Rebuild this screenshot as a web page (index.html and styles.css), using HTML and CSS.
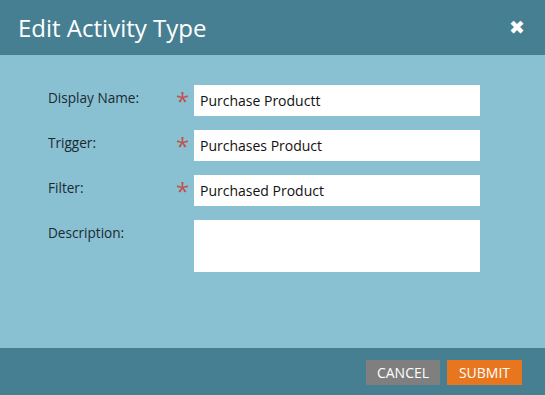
FILE: index.html
```html
<!DOCTYPE html>
<html lang="en">
<head>
  <meta charset="UTF-8">
  <title>Edit Activity Type</title>
  <link rel="stylesheet" href="styles.css">
</head>
<body>
  <div class="dialog">
    <div class="dialog-header">
      <h1>Edit Activity Type</h1>
      <span class="close">&#10006;</span>
    </div>

    <form class="dialog-body">
      <label class="field-label">Display Name:</label>
      <span class="req">*</span>
      <input type="text" class="field" value="Purchase Productt">

      <label class="field-label">Trigger:</label>
      <span class="req">*</span>
      <input type="text" class="field" value="Purchases Product">

      <label class="field-label">Filter:</label>
      <span class="req">*</span>
      <input type="text" class="field" value="Purchased Product">

      <label class="field-label">Description:</label>
      <span class="req"></span>
      <textarea class="field area"></textarea>
    </form>

    <div class="dialog-footer">
      <button class="btn btn-cancel">CANCEL</button>
      <button class="btn btn-submit">SUBMIT</button>
    </div>
  </div>
</body>
</html>
```

FILE: styles.css
```css
body {
  margin: 0;
  font-family: 'Open Sans', sans-serif;
}

.dialog {
  width: 545px;
  height: 395px;
  display: flex;
  flex-direction: column;
  background: #89c1d3;
}

.dialog-header {
  height: 55px;
  background: #477f92;
  display: flex;
  align-items: center;
  justify-content: space-between;
  padding: 0 20px 0 18px;
}

.dialog-header h1 {
  margin: 0;
  color: #fff;
  font-size: 24px;
  font-weight: normal;
  padding-bottom: 1px;
}

.close {
  color: #fff;
  font-size: 19px;
  font-weight: bold;
  font-family: 'DejaVu Sans', sans-serif;
  padding-bottom: 2px;
}

.dialog-body {
  flex: 1;
  display: grid;
  grid-template-columns: 128px 18px 286px;
  grid-auto-rows: min-content;
  row-gap: 14px;
  padding: 30px 0 0 48px;
  margin: 0;
}

.field-label {
  font-size: 13.6px;
  color: #1a2a30;
  padding-top: 3px;
}

.req {
  color: #c0534e;
  font-size: 24px;
  line-height: 24px;
  padding-top: 4px;
}

.field {
  height: 31px;
  box-sizing: border-box;
  border: none;
  margin: 0;
  padding: 0 6px 1px;
  font-family: 'Open Sans', sans-serif;
  font-size: 14px;
  color: #111;
  background: #fff;
}

.area {
  height: 52px;
  resize: none;
}

.dialog-footer {
  height: 47px;
  background: #477f92;
  display: flex;
  justify-content: flex-end;
  align-items: flex-start;
  gap: 7px;
  padding: 12px 23px 0 0;
  box-sizing: border-box;
}

.btn {
  height: 25px;
  border: none;
  color: #fff;
  font-family: 'Open Sans', sans-serif;
  font-size: 14px;
  padding: 0;
}

.btn-cancel {
  width: 74px;
  background: #7f7f7f;
}

.btn-submit {
  width: 75px;
  background: #e8761e;
}
```
